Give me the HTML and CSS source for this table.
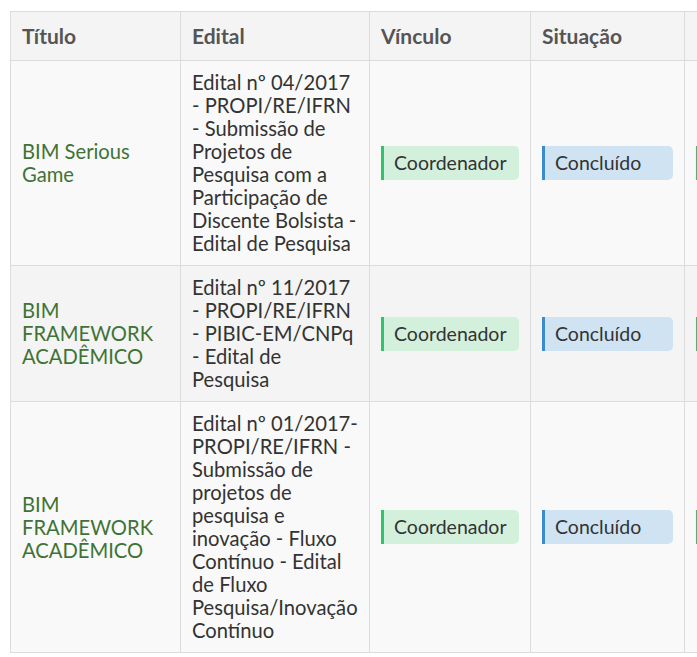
FILE: index.html
```html
<!DOCTYPE html>
<html lang="pt-BR">
<head>
<meta charset="utf-8">
<title>Projetos</title>
<link rel="stylesheet" href="styles.css">
</head>
<body>
<div class="wrap">
<table class="grid">
  <colgroup>
    <col class="c1"><col class="c2"><col class="c3"><col class="c4"><col class="c5">
  </colgroup>
  <thead>
    <tr>
      <th>Título</th>
      <th>Edital</th>
      <th>Vínculo</th>
      <th>Situação</th>
      <th class="sort">Participação</th>
    </tr>
  </thead>
  <tbody>
    <tr>
      <td><a href="#" class="title">BIM Serious Game</a></td>
      <td class="ed">Edital nº 04/2017 - PROPI/RE/IFRN - Submissão de Projetos de Pesquisa com a Participação de Discente Bolsista - Edital de Pesquisa</td>
      <td><span class="badge green">Coordenador</span></td>
      <td><span class="badge blue">Concluído</span></td>
      <td><span class="badge green">Sim</span></td>
    </tr>
    <tr>
      <td><a href="#" class="title">BIM FRAMEWORK ACADÊMICO</a></td>
      <td class="ed">Edital nº 11/2017 - PROPI/RE/IFRN - PIBIC-EM/CNPq - Edital de Pesquisa</td>
      <td><span class="badge green">Coordenador</span></td>
      <td><span class="badge blue">Concluído</span></td>
      <td><span class="badge green">Sim</span></td>
    </tr>
    <tr>
      <td><a href="#" class="title">BIM FRAMEWORK ACADÊMICO</a></td>
      <td class="ed">Edital nº 01/2017- PROPI/RE/IFRN - Submissão de projetos de pesquisa e inovação - Fluxo Contínuo - Edital de Fluxo Pesquisa/Inovação Contínuo</td>
      <td><span class="badge green">Coordenador</span></td>
      <td><span class="badge blue">Concluído</span></td>
      <td><span class="badge green">Sim</span></td>
    </tr>
  </tbody>
</table>
</div>
</body>
</html>
```
FILE: styles.css
```css
html, body {
  margin: 0;
  padding: 0;
  background: #fff;
  overflow: hidden;
}
body {
  font-family: Lato, "Open Sans", sans-serif;
  font-size: 20.2px;
  line-height: 23px;
  color: #333;
}
.wrap {
  padding: 11px 0 0 10px;
  width: 1200px;
}
.grid {
  border-collapse: collapse;
  table-layout: fixed;
  width: 824px;
}
.c1 { width: 170px; }
.c2 { width: 189px; }
.c3 { width: 161px; }
.c4 { width: 154px; }
.c5 { width: 150px; }
.grid th, .grid td {
  border: 1px solid #dcdcdc;
  padding: 10px 11px;
  text-align: left;
  vertical-align: middle;
}
.grid td.ed {
  padding-right: 8px;
}
.grid th {
  background: #f4f4f4;
  color: #555;
  font-weight: 700;
  font-size: 21px;
  padding: 12px 11px 13px;
}
.grid th.sort { color: #c27a4a; }
.grid tbody tr:nth-child(odd) td { background: #f9f9f9; }
.grid tbody tr:nth-child(even) td { background: #f4f4f4; }
.title {
  color: #3f7336;
  text-decoration: none;
}
.badge {
  display: block;
  height: 34px;
  line-height: 34px;
  padding: 0 10px;
  font-size: 19.5px;
  color: #333;
  border-left: 3px solid;
  border-radius: 0 5px 5px 0;
}
.badge.green {
  background: #d3f0dc;
  border-left-color: #2fc46a;
}
.badge.blue {
  background: #cfe3f3;
  border-left-color: #3a8ccc;
}
```
